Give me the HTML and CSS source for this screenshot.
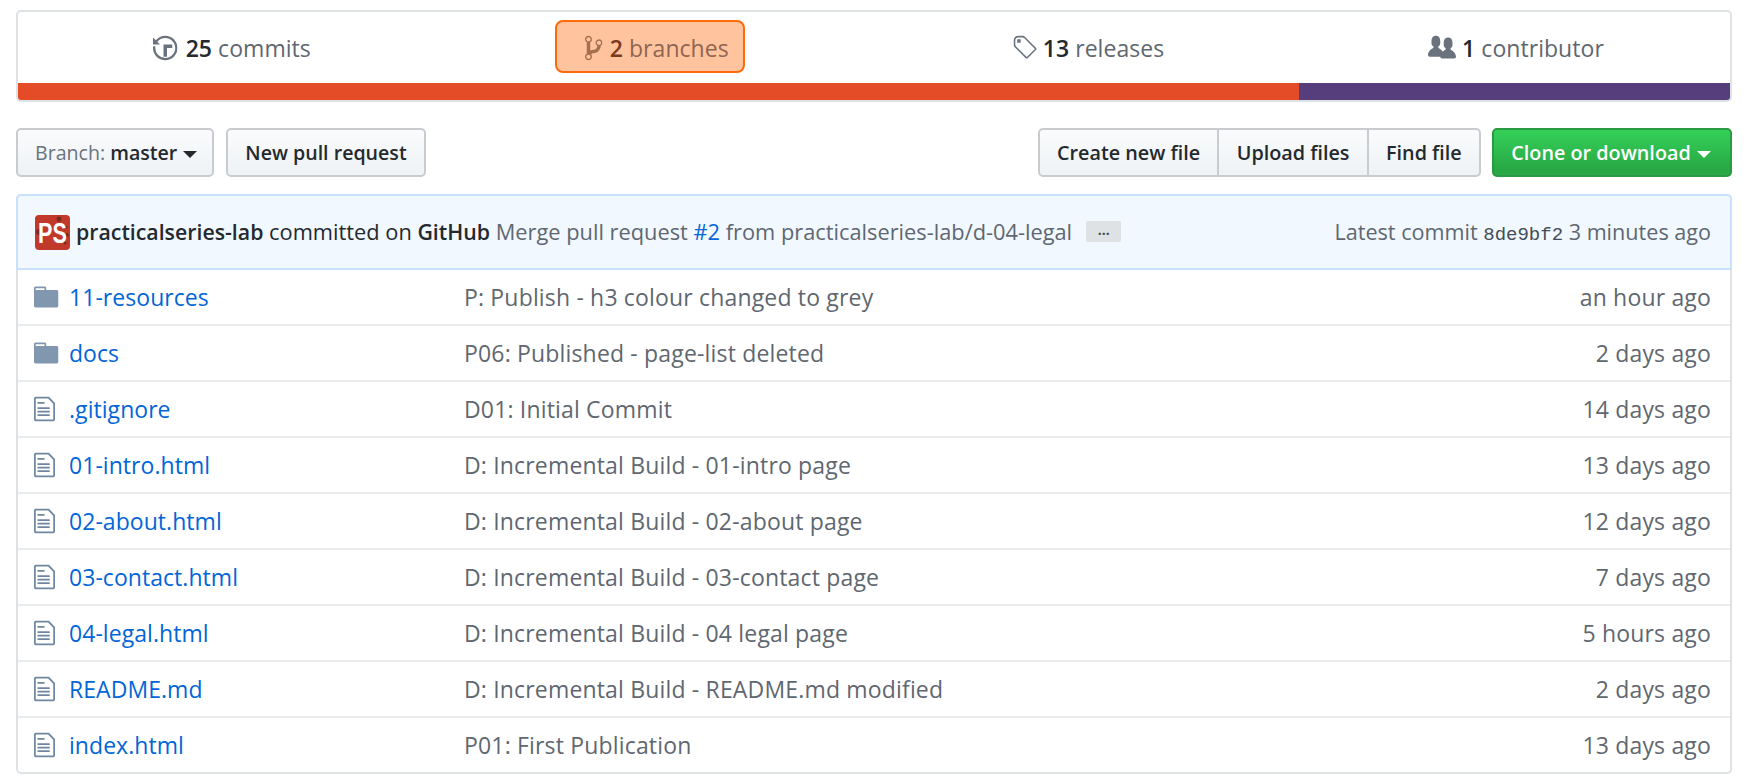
FILE: index.html
```html
<!DOCTYPE html>
<html lang="en">
<head>
<meta charset="utf-8">
<title>Repository</title>
<link rel="stylesheet" href="styles.css">
</head>
<body>
<svg class="defs" width="0" height="0" aria-hidden="true">
  <symbol id="i-history" viewBox="0 0 14 16"><path d="M8 13H6V6h5v2H8v5zM7 1C4.81 1 2.87 2.02 1.59 3.59L0 2v4h4L2.5 4.5C3.55 3.17 5.17 2.3 7 2.3c3.14 0 5.7 2.56 5.7 5.7s-2.56 5.7-5.7 5.7A5.689 5.689 0 0 1 1.3 8c0-.34.03-.67.09-1H.08C.03 7.33 0 7.66 0 8c0 3.86 3.14 7 7 7s7-3.14 7-7-3.14-7-7-7z"/></symbol>
  <symbol id="i-branch" viewBox="0 0 10 16"><path d="M10 5c0-1.11-.89-2-2-2a1.993 1.993 0 0 0-1 3.72v.3c-.02.52-.23.98-.63 1.38-.4.4-.86.61-1.38.63-.83.02-1.48.16-2 .45V4.72a1.993 1.993 0 0 0-1-3.72C.88 1 0 1.89 0 3a2 2 0 0 0 1 1.72v6.56c-.59.35-1 .99-1 1.72 0 1.11.89 2 2 2 1.11 0 2-.89 2-2 0-.53-.2-1-.53-1.36.09-.06.48-.41.59-.47.25-.11.56-.17.94-.17 1.05-.05 1.95-.45 2.75-1.25S8.95 7.77 9 6.73h-.02C9.59 6.37 10 5.73 10 5zM2 1.8c.66 0 1.2.55 1.2 1.2 0 .65-.55 1.2-1.2 1.2C1.35 4.2.8 3.65.8 3c0-.65.55-1.2 1.2-1.2zm0 12.41c-.66 0-1.2-.55-1.2-1.2 0-.65.55-1.2 1.2-1.2.65 0 1.2.55 1.2 1.2 0 .65-.55 1.2-1.2 1.2zm6-8c-.66 0-1.2-.55-1.2-1.2 0-.65.55-1.2 1.2-1.2.65 0 1.2.55 1.2 1.2 0 .65-.55 1.2-1.2 1.2z"/></symbol>
  <symbol id="i-tag" viewBox="0 0 15 16"><path d="M7.73 1.73C7.26 1.26 6.62 1 5.96 1H3.5C2.13 1 1 2.13 1 3.5v2.47c0 .66.27 1.3.73 1.77l6.06 6.06c.39.39 1.02.39 1.41 0l4.59-4.59a.996.996 0 0 0 0-1.41L7.73 1.73zM2.38 7.09c-.31-.3-.47-.7-.47-1.13V3.5c0-.88.72-1.59 1.59-1.59h2.47c.42 0 .83.16 1.13.47l6.14 6.13-4.73 4.73-6.13-6.15zM3.01 3h2v2H3V3h.01z"/></symbol>
  <symbol id="i-org" viewBox="0 0 16 16"><path d="M16 12.999c0 .439-.45 1-1 1H7.995c-.539 0-.994-.447-.995-.999H1c-.54 0-1-.561-1-1 0-2.634 3-4 3-4s.229-.409 0-1c-.841-.621-1.058-.59-1-3 .058-2.419 1.367-3 2.5-3s2.442.58 2.5 3c.058 2.41-.159 2.379-1 3-.229.59 0 1 0 1s1.549.711 2.42 2.088C9.196 9.369 10 8.999 10 8.999s.229-.409 0-1c-.841-.62-1.058-.59-1-3 .058-2.419 1.367-3 2.5-3s2.437.581 2.495 3c.059 2.41-.158 2.38-1 3-.229.59 0 1 0 1s3.005 1.366 3.005 4z"/></symbol>
  <symbol id="i-dir" viewBox="0 0 14 16"><path d="M13 4H7V3c0-.66-.31-1-1-1H1c-.55 0-1 .45-1 1v10c0 .55.45 1 1 1h12c.55 0 1-.45 1-1V5c0-.55-.45-1-1-1zM6 4H1V3h5v1z"/></symbol>
  <symbol id="i-file" viewBox="0 0 12 16"><path d="M6 5H2V4h4v1zM2 8h7V7H2v1zm0 2h7V9H2v1zm0 2h7v-1H2v1zm10-7.5V14c0 .55-.45 1-1 1H1c-.55 0-1-.45-1-1V2c0-.55.45-1 1-1h7.5L12 4.5zM11 5L8 2H1v12h10V5z"/></symbol>
</svg>

<main class="page">
  <section class="summary">
    <div class="stats">
      <div class="stat"><a class="stat-link"><svg class="ico ico-history"><use href="#i-history"/></svg><b>25</b> commits</a></div>
      <div class="stat stat-active"><a class="stat-link stat-link-hl"><svg class="ico ico-branch"><use href="#i-branch"/></svg><b>2</b> branches</a></div>
      <div class="stat"><a class="stat-link"><svg class="ico ico-tag"><use href="#i-tag"/></svg><b>13</b> releases</a></div>
      <div class="stat"><a class="stat-link"><svg class="ico ico-org"><use href="#i-org"/></svg><b>1</b> contributor</a></div>
    </div>
    <div class="langbar"><span class="lang-html"></span><span class="lang-css"></span></div>
  </section>

  <section class="toolbar">
    <div class="tool-left">
      <button class="btn"><span class="muted">Branch:</span> master<i class="caret"></i></button>
      <button class="btn">New pull request</button>
    </div>
    <div class="tool-right">
      <div class="btn-group">
        <button class="btn">Create new file</button>
        <button class="btn">Upload files</button>
        <button class="btn">Find file</button>
      </div>
      <button class="btn btn-green">Clone or download<i class="caret"></i></button>
    </div>
  </section>

  <section class="files">
    <div class="tease">
      <svg class="avatar" viewBox="0 0 35 35" aria-hidden="true">
        <rect width="35" height="35" rx="4" fill="#c0392b"/>
        <circle cx="4" cy="17" r="3" fill="#7d2a1e"/><circle cx="24" cy="4" r="2.5" fill="#7d2a1e"/><circle cx="32" cy="20" r="2" fill="#7d2a1e"/><circle cx="31" cy="12" r="1.5" fill="#7d2a1e"/><circle cx="30" cy="28" r="1.5" fill="#7d2a1e"/>
        <text transform="translate(17.5 28) scale(.72 1)" class="avatar-text">PS</text>
      </svg>
      <span class="tease-main"><b>practicalseries-lab</b> committed on <b>GitHub</b> <span class="msg">Merge pull request <a class="issue">#2</a> from practicalseries-lab/d-04-legal</span></span>
      <span class="hellip">…</span>
      <span class="tease-right">Latest commit <code class="sha">8de9bf2</code> 3 minutes ago</span>
    </div>

    <div class="row"><svg class="ficon dir"><use href="#i-dir"/></svg><a class="name">11-resources</a><span class="message">P: Publish - h3 colour changed to grey</span><span class="age">an hour ago</span></div>
    <div class="row"><svg class="ficon dir"><use href="#i-dir"/></svg><a class="name">docs</a><span class="message">P06: Published - page-list deleted</span><span class="age">2 days ago</span></div>
    <div class="row"><svg class="ficon doc"><use href="#i-file"/></svg><a class="name">.gitignore</a><span class="message">D01: Initial Commit</span><span class="age">14 days ago</span></div>
    <div class="row"><svg class="ficon doc"><use href="#i-file"/></svg><a class="name">01-intro.html</a><span class="message">D: Incremental Build - 01-intro page</span><span class="age">13 days ago</span></div>
    <div class="row"><svg class="ficon doc"><use href="#i-file"/></svg><a class="name">02-about.html</a><span class="message">D: Incremental Build - 02-about page</span><span class="age">12 days ago</span></div>
    <div class="row"><svg class="ficon doc"><use href="#i-file"/></svg><a class="name">03-contact.html</a><span class="message">D: Incremental Build - 03-contact page</span><span class="age">7 days ago</span></div>
    <div class="row"><svg class="ficon doc"><use href="#i-file"/></svg><a class="name">04-legal.html</a><span class="message">D: Incremental Build - 04 legal page</span><span class="age">5 hours ago</span></div>
    <div class="row"><svg class="ficon doc"><use href="#i-file"/></svg><a class="name">README.md</a><span class="message">D: Incremental Build - README.md modified</span><span class="age">2 days ago</span></div>
    <div class="row"><svg class="ficon doc"><use href="#i-file"/></svg><a class="name">index.html</a><span class="message">P01: First Publication</span><span class="age">13 days ago</span></div>
  </section>
</main>
</body>
</html>
```
FILE: styles.css
```css
* { box-sizing: border-box; }
html, body { margin: 0; padding: 0; background: #fff; }
body {
  font-family: "Open Sans", "Noto Sans", "Liberation Sans", sans-serif;
  font-size: 21px;
  color: #24292e;
}
.defs { position: absolute; }
.page { width: 1716px; margin-left: 16px; padding-top: 10px; }

/* summary */
.summary { height: 92px; border: 2px solid #dfe2e5; border-radius: 5px; overflow: hidden; display: flex; flex-direction: column; }
.stats { display: flex; height: 71px; padding-top: 8px; flex: none; }
.stat { flex: 1 1 25%; display: flex; justify-content: center; align-items: flex-start; }
.stat-active { padding-right: 20px; }
.stat-link { display: flex; align-items: center; height: 53px; padding-top: 2px; color: #5f6770; white-space: pre; font-size: 23px; letter-spacing: .05px; }
.stat-link b { font-weight: 600; color: #24292e; }
.stat-link-hl { width: 190px; justify-content: center; padding-left: 14px; background: #ffc49d; border: 2px solid #ff6a0d; border-radius: 8px; color: #8e6553; }
.stat-link-hl b { color: #7c3a22; }
.ico { fill: #6a737d; height: 28px; margin-right: 6px; flex: none; }
.ico-history { width: 24.5px; margin-right: 8px; }
.ico-branch { width: 17.5px; margin-right: 7px; fill: #a4704f; }
.ico-tag { width: 26px; margin-right: 5px; }
.ico-org { width: 28px; }
.langbar { display: flex; flex: 1; }
.lang-html { flex: 0 0 1281px; background: #e34c26; }
.lang-css { flex: 1; background: #563d7c; }

/* toolbar */
.toolbar { display: flex; justify-content: space-between; margin-top: 26px; height: 49px; }
.tool-left, .tool-right, .btn-group { display: flex; }
.tool-left { gap: 12px; }
.tool-right { gap: 11px; }
.btn {
  font: 600 19.8px "Open Sans", "Noto Sans", sans-serif;
  color: #24292e;
  height: 49px;
  padding: 0 17.3px;
  background: linear-gradient(#fafbfc, #eff3f6 90%);
  border: 2px solid #c9cbce;
  border-radius: 5px;
  white-space: pre;
  display: flex;
  align-items: center;
}
.tool-left .btn { font-size: 19.6px; padding: 0 17px; }
.tool-left .btn:first-child { padding-right: 15px; }
.muted { color: #6a737d; font-weight: 400; }
.caret { display: inline-block; margin-left: 6px; margin-top: 3px; border: 7px solid transparent; border-top-color: currentColor; border-bottom: 0; }
.btn-group .btn { border-radius: 0; margin-left: -2px; }
.btn-group .btn:first-child { border-radius: 5px 0 0 5px; margin-left: 0; }
.btn-group .btn:last-child { border-radius: 0 5px 5px 0; }
.btn-green { color: #fff; background: linear-gradient(#34d058, #28a745 90%); border-color: #2a9a45; width: 240px; }

/* files */
.files { margin-top: 17px; height: 580px; border: 2px solid #dfe2e5; border-top: 0; border-radius: 5px; }
.tease {
  height: 76px;
  margin: 0 -2px;
  display: flex;
  align-items: center;
  padding: 0 19px 2px 17px;
  background: #f1f8ff;
  border: 2px solid #c8e1ff;
  border-radius: 5px 5px 0 0;
  color: #24292e;
  white-space: pre;
  font-size: 21.8px;
}
.avatar { width: 35px; height: 35px; margin-right: 6px; flex: none; position: relative; top: 1px; }
.avatar-text { font: 700 30px "Liberation Sans", sans-serif; fill: #fff; text-anchor: middle; }
.tease-main b { font-weight: 600; font-size: 21.3px; }
.msg { color: #5f6770; }
.issue { color: #0366d6; }
.hellip { margin-left: 14px; width: 35px; height: 21px; background: #dfe2e5; color: #444d56; font-size: 14px; font-weight: 700; line-height: 18px; text-align: center; border-radius: 2px; }
.tease-right { margin-left: auto; color: #5f6770; font-size: 21.6px; }
.sha { font: 19px "Liberation Mono", "DejaVu Sans Mono", monospace; color: #444d56; }

.row { display: flex; align-items: center; height: 56px; border-top: 2px solid #eaecef; padding: 0 0 0 16px; color: #5f6770; font-size: 23px; letter-spacing: .17px; }
.tease + .row { border-top: 0; height: 54px; }
.ficon { height: 28px; flex: none; }
.dir { width: 24.5px; fill: #8197b0; margin-right: 10.5px; }
.doc { width: 21px; fill: #6f86a3; margin-right: 14px; }
.name { color: #0366d6; width: 395px; flex: none; letter-spacing: .05px; }
.message { flex: 1; }
.age { padding-right: 19px; }
```
